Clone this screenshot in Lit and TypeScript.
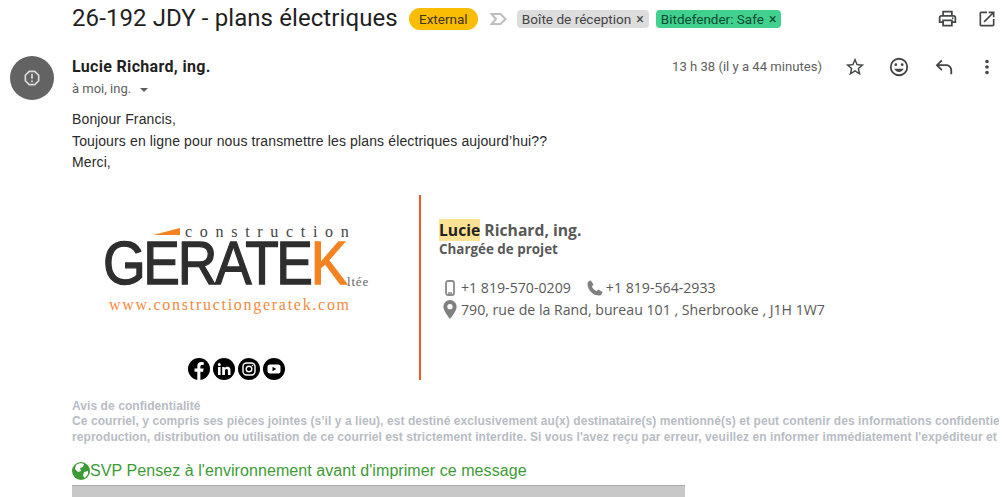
import { LitElement, html, css, svg } from "lit";
import { customElement } from "lit/decorators.js";

const ic = (d: string, size = 24, fill = "#444746") => html`<svg class="ic" width=${size} height=${size} viewBox="0 0 24 24" fill=${fill}>${svg`<path d=${d}></path>`}</svg>`;

@customElement("app-root")
export class AppRoot extends LitElement {
  static styles = css`
    :host { display: block; width: 1005px; height: 497px; overflow: hidden; background: #fff; font-family: "Liberation Sans", Arial, sans-serif; color: #222; }
    svg { display: block; flex: none; }
    .head { display: flex; align-items: center; height: 37px; padding-left: 72px; }
    .title { font: 400 24px/37px Roboto, sans-serif; color: #1f1f1f; letter-spacing: 0.09px; white-space: nowrap; }
    .ext { margin-left: 11px; height: 22px; width: 69px; border-radius: 11px; background: #fbbc04; color: #41331c; font: 400 13.5px/22px Roboto, sans-serif; text-align: center; }
    .imp { margin-left: 12px; margin-right: 10px; }
    .chip { height: 18px; border-radius: 4px; padding: 0 5px; font: 400 13.6px/18px Roboto, sans-serif; display: flex; align-items: center; gap: 5px; color: #444; background: #dddddd; white-space: nowrap; margin-right: 7px; }
    .chip.green { background: #3fd18d; color: #0f4a34; margin-right: 0; font-size: 13.5px; }
    .chip i { font-style: normal; font-size: 14px; line-height: 18px; }
    .head-actions { margin-left: auto; display: flex; align-items: center; gap: 19px; padding-right: 8px; }
    .sender { display: flex; height: 46px; margin-top: 19px; padding-left: 10px; }
    .avatar { width: 44px; height: 44px; border-radius: 50%; background: #636363; display: flex; align-items: center; justify-content: center; }
    .who { margin-left: 18px; }
    .name { font: 700 16px/20px Roboto, sans-serif; color: #1f1f1f; margin-top: 1px; letter-spacing: 0.32px; white-space: nowrap; }
    .to { display: flex; align-items: center; gap: 7px; font: 400 13px/20px Roboto, sans-serif; color: #5e5e5e; margin-top: 2px; }
    .caret { width: 0; height: 0; border-left: 4px solid transparent; border-right: 4px solid transparent; border-top: 4px solid #5e5e5e; margin-top: 1px; margin-left: 2px; }
    .meta { margin-left: auto; display: flex; align-items: center; height: 22px; padding-right: 7px; }
    .time { font: 400 13.1px/22px Roboto, sans-serif; color: #5e5e5e; margin-right: 22px; white-space: nowrap; }
    .meta-icons { display: flex; gap: 22px; }
    .body { padding-left: 72px; margin-top: 7px; font-size: 14px; line-height: 21.6px; letter-spacing: 0.13px; color: #2a2a2a; }
    .sig { display: flex; margin-top: 21px; height: 185px; padding-left: 72px; }
    .logo-col { width: 349px; box-sizing: border-box; display: flex; flex-direction: column; align-items: flex-start; border-right: 2px solid #f15a22; }
    .logo { display: flex; flex-direction: column; margin-left: 33px; margin-top: 29px; width: 270px; height: 122px; }
    .cons { font: 400 16px/16px "Liberation Serif", serif; letter-spacing: 7.7px; color: #444; margin-left: 80px; white-space: nowrap; display: flex; align-items: center; gap: 5px; }
    .wedge { width: 27px; height: 7px; margin-left: -32px; }
    .mark-row { display: flex; align-items: flex-end; height: 46px; white-space: nowrap; margin-left: -2px; }
    .mark { display: inline-block; width: 244px; font: 400 61px/46px "Liberation Sans", sans-serif; color: #2e2e2e; letter-spacing: -2.6px; -webkit-text-stroke: 1.3px #2e2e2e; transform: scaleX(0.9); transform-origin: left center; }
    .mark b { color: #f58220; font-weight: 400; -webkit-text-stroke: 1.3px #f58220; }
    .ltee { font: 400 13px/13px "Liberation Serif", serif; color: #666; letter-spacing: 0.8px; margin-bottom: -2px; }
    .web { font: 400 16px/18px "Liberation Serif", serif; letter-spacing: 1.72px; color: #f58a3c; margin-top: 10px; margin-left: 4px; white-space: nowrap; }
    .socials { display: flex; gap: 3px; margin-left: 116px; margin-top: 34px; }
    .info { margin-left: 18px; font-family: "Open Sans", sans-serif; color: #595959; }
    .n { font-size: 15.7px; font-weight: 700; line-height: 23px; margin-top: 24px; white-space: nowrap; }
    mark { background: #fde293; color: #222; }
    .role { font-size: 13.4px; font-weight: 700; line-height: 18px; margin-top: -2px; white-space: nowrap; }
    .line { display: flex; align-items: center; font-size: 14.15px; line-height: 22px; white-space: nowrap; }
    .line.first { margin-top: 19px; }
    .mob { margin: 0 6px; }
    .ph { margin: 0 2px 0 15px; }
    .pin { margin: 0 4px; }
    .legal { width: 927px; overflow: hidden; margin-left: 72px; margin-top: 19px; font-size: 12px; font-weight: 700; letter-spacing: 0.07px; line-height: 15.5px; color: #b8bcc4; white-space: nowrap; }
    .green-line { display: flex; align-items: center; margin-top: 16px; padding-left: 72px; font-size: 16px; line-height: 20px; letter-spacing: 0.07px; color: #3d9b35; white-space: nowrap; }
    .bar { margin: 4px 0 0 72px; width: 613px; height: 12px; background: #c8c8c8; border-top: 1px solid #aaa; }
  `;

  render() {
    return html`
      <div class="head">
        <div class="title">26-192 JDY - plans électriques</div>
        <div class="ext">External</div>
        <svg class="imp" width="17" height="14" viewBox="0 0 17 14" fill="none" stroke="#bdbdbd" stroke-width="2"><path d="M1.500 2h9l5 5-5 5h-9l4.500-5z"/></svg>
        <div class="chip">Boîte de réception <i>×</i></div>
        <div class="chip green">Bitdefender: Safe <i>×</i></div>
        <div class="head-actions">
          ${ic("M19 8h-1V3H6v5H5c-1.66 0-3 1.34-3 3v6h4v4h12v-4h4v-6c0-1.66-1.34-3-3-3zM8 5h8v3H8V5zm8 12v2H8v-4h8v2zm2-2v-2H6v2H4v-4c0-.55.45-1 1-1h14c.55 0 1 .45 1 1v4h-2z M18 10.5a1 1 0 1 0 0 2 1 1 0 0 0 0-2z", 21)}
          ${ic("M19 19H5V5h7V3H5c-1.11 0-2 .9-2 2v14c0 1.1.89 2 2 2h14c1.1 0 2-.9 2-2v-7h-2v7zM14 3v2h3.59l-9.83 9.83 1.41 1.41L19 6.41V10h2V3h-7z", 20)}
        </div>
      </div>
      <div class="sender">
        <div class="avatar">
          <svg width="20" height="20" viewBox="0 0 24 24" fill="#dcdcdc"><path d="M15.73 3H8.27L3 8.27v7.46L8.27 21h7.46L21 15.73V8.27L15.73 3zM19 14.9 14.9 19H9.1L5 14.9V9.1L9.1 5h5.8L19 9.1v5.8zM11 7h2v6h-2V7zm0 8h2v2h-2v-2z"/></svg>
        </div>
        <div class="who">
          <div class="name">Lucie Richard, ing.</div>
          <div class="to">à moi, ing. <span class="caret"></span></div>
        </div>
        <div class="meta">
          <div class="time">13 h 38 (il y a 44 minutes)</div>
          <div class="meta-icons">
            ${ic("M22 9.24l-7.19-.62L12 2 9.19 8.63 2 9.24l5.46 4.73L5.82 21 12 17.27 18.18 21l-1.63-7.03L22 9.24zM12 15.4l-3.76 2.27 1-4.28-3.32-2.88 4.38-.38L12 6.1l1.71 4.04 4.38.38-3.32 2.88 1 4.28L12 15.4z", 22)}
            ${ic("M15.5 11a1.5 1.5 0 1 0 0-3 1.5 1.5 0 0 0 0 3zm-7 0a1.5 1.5 0 1 0 0-3 1.5 1.5 0 0 0 0 3zM12 2a10 10 0 1 0 0 20 10 10 0 0 0 0-20zm0 18a8 8 0 1 1 0-16 8 8 0 0 1 0 16zm0-2.5c2.33 0 4.31-1.46 5.11-3.5H6.89c.8 2.04 2.78 3.5 5.11 3.5z", 22)}
            ${ic("M20 20v-4.5c0-2.5-2-4.500-4.500-4.500H7.800l3.600 3.600L10 16l-6-6 6-6 1.400 1.400L7.800 9h7.700c3.600 0 6.500 2.900 6.500 6.500V20z", 22)}
            ${ic("M12 8a2 2 0 1 0 0-4 2 2 0 0 0 0 4zm0 2a2 2 0 1 0 0 4 2 2 0 0 0 0-4zm0 6a2 2 0 1 0 0 4 2 2 0 0 0 0-4z", 22)}
          </div>
        </div>
      </div>
      <div class="body">
        <div>Bonjour Francis,</div>
        <div>Toujours en ligne pour nous transmettre les plans électriques aujourd’hui??</div>
        <div>Merci,</div>
      </div>
      <div class="sig">
        <div class="logo-col">
          <div class="logo">
            <div class="cons"><svg class="wedge" viewBox="0 0 27 7"><path d="M0 7 27 0v7z" fill="#f58220"/></svg>construction</div>
            <div class="mark-row"><span class="mark">GERATE<b>K</b></span><span class="ltee">ltée</span></div>
            <div class="web">www.constructiongeratek.com</div>
          </div>
          <div class="socials">
            <svg width="22" height="22" viewBox="0 0 22 22"><circle cx="11" cy="11" r="11"/><path d="M12.4 22v-8.3h2.7l.5-3.2h-3.2V8.6c0-1 .4-1.6 1.7-1.6h1.6V4.2c-.6-.1-1.4-.2-2.3-.2-2.5 0-4.1 1.5-4.1 4.2v2.3H6.5v3.2h2.800V22z" fill="#fff"/></svg>
            <svg width="22" height="22" viewBox="0 0 22 22"><circle cx="11" cy="11" r="11"/><path d="M5 9h2.600v8H5zM6.300 5a1.500 1.500 0 1 1 0 3 1.500 1.500 0 0 1 0-3zM9.200 9h2.500v1.100c.4-.7 1.300-1.300 2.600-1.300 2.700 0 3.200 1.700 3.200 4V17h-2.600v-3.700c0-1 0-2.200-1.300-2.200s-1.600 1-1.600 2.100V17H9.200z" fill="#fff"/></svg>
            <svg width="22" height="22" viewBox="0 0 22 22"><circle cx="11" cy="11" r="11"/><rect x="5" y="5" width="12" height="12" rx="3.500" fill="none" stroke="#fff" stroke-width="1.400"/><circle cx="11" cy="11" r="2.800" fill="none" stroke="#fff" stroke-width="1.400"/><circle cx="14.500" cy="7.500" r=".8" fill="#fff"/></svg>
            <svg width="22" height="22" viewBox="0 0 22 22"><circle cx="11" cy="11" r="11"/><rect x="4.500" y="6.500" width="13" height="9" rx="2.500" fill="#fff"/><path d="M9.500 8.800v4.400l3.800-2.200z"/></svg>
          </div>
        </div>
        <div class="info">
          <div class="n"><mark>Lucie</mark> Richard, ing.</div>
          <div class="role">Chargée de projet</div>
          <div class="line first">
            <svg class="mob" width="10" height="16" viewBox="0 0 10 16"><rect x="1" y="1" width="8" height="14" rx="2" fill="none" stroke="#8a8a8a" stroke-width="1.800"/><rect x="3" y="12.300" width="4" height="1.500" fill="#8a8a8a"/></svg>
            +1 819-570-0209
            <svg class="ph" width="18" height="18" viewBox="0 0 24 24" fill="#808080"><path d="M6.600 2 10 7.500 7.800 10c1.200 2.600 3.500 5 6.200 6.200l2.500-2.200 5.500 3.400c-.3 2.400-2 4.600-4.500 4.600C9.500 22 2 14.500 2 6.500 2 4 4.200 2.300 6.600 2z"/></svg>
            +1 819-564-2933
          </div>
          <div class="line">
            <svg class="pin" width="14" height="19" viewBox="0 0 14 20" fill="#808080"><path fill-rule="evenodd" d="M7 0a7 7 0 0 1 7 7c0 4.500-7 13-7 13S0 11.500 0 7a7 7 0 0 1 7-7zm0 4.200a2.800 2.800 0 1 0 0 5.600 2.800 2.800 0 0 0 0-5.600z"/></svg>
            790, rue de la Rand, bureau 101 , Sherbrooke , J1H 1W7
          </div>
        </div>
      </div>
      <div class="legal">
        <div>Avis de confidentialité</div>
        <div>Ce courriel, y compris ses pièces jointes (s’il y a lieu), est destiné exclusivement au(x) destinataire(s) mentionné(s) et peut contenir des informations confidentielles.</div>
        <div>reproduction, distribution ou utilisation de ce courriel est strictement interdite. Si vous l'avez reçu par erreur, veuillez en informer immédiatement l'expéditeur et</div>
      </div>
      <div class="green-line">
        <svg width="18" height="20" viewBox="0 0 18 20"><circle cx="9" cy="10" r="9" fill="#3d9b35"/><path d="M4 4c3-2 6-2 8-1l-1 3-3 1 1 3-3 1-3-3zM12 11l4-1 0 3-3 4-2-2z" fill="#fff"/></svg>
        SVP Pensez à l'environnement avant d'imprimer ce message
      </div>
      <div class="bar"></div>
    `;
  }
}
